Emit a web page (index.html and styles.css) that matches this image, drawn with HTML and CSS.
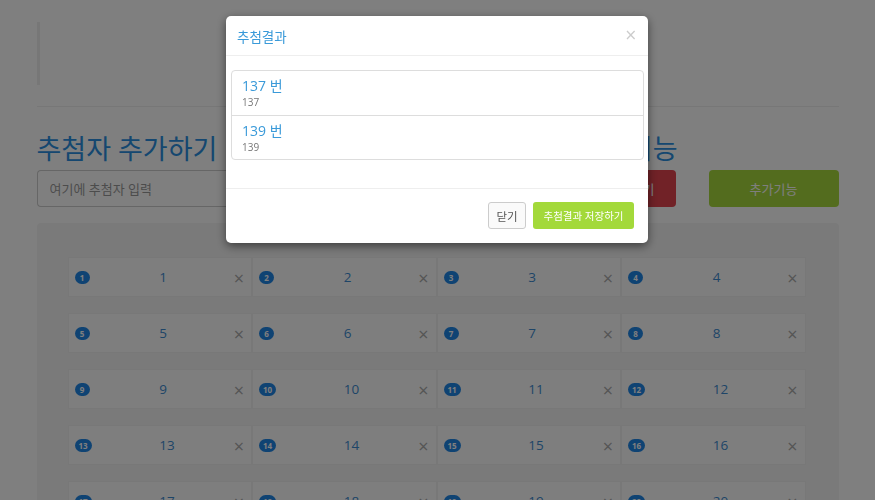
FILE: index.html
```html
<!DOCTYPE html>
<html lang="ko">
<head>
<meta charset="utf-8">
<title>추첨</title>
<link rel="stylesheet" href="styles.css">
</head>
<body>
<div class="container">
  <blockquote class="intro"></blockquote>
  <hr class="divider">
  <div class="head-row">
    <h2 class="title-main">추첨자 추가하기</h2>
    <h2 class="title-side">랜덤 추첨 기능</h2>
  </div>
  <div class="control-row">
    <div class="input-group">
      <input class="name-input" type="text" placeholder="여기에 추첨자 입력">
      <button class="btn btn-danger">추첨하기</button>
    </div>
    <button class="btn btn-extra">추가기능</button>
  </div>
  <div class="well">
    <div class="grid" id="grid"></div>
  </div>
</div>

<div class="backdrop"></div>
<div class="modal">
  <div class="modal-header">
    <h4 class="modal-title">추첨결과</h4>
    <button class="close">×</button>
  </div>
  <div class="modal-body">
    <div class="list-group">
      <div class="list-item">
        <div class="item-head">137 번</div>
        <div class="item-text">137</div>
      </div>
      <div class="list-item">
        <div class="item-head">139 번</div>
        <div class="item-text">139</div>
      </div>
    </div>
  </div>
  <div class="modal-footer">
    <button class="btn btn-default">닫기</button>
    <button class="btn btn-save">추첨결과 저장하기</button>
  </div>
</div>
<script>
  var g = document.getElementById('grid');
  for (var i = 1; i <= 20; i++) {
    var c = document.createElement('div');
    c.className = 'cell';
    c.innerHTML = '<div class="cell-left"><span class="badge">' + i + '</span></div>' +
      '<div class="cell-right"><span class="num">' + i + '</span><span class="del">×</span></div>';
    g.appendChild(c);
  }
</script>
</body>
</html>
```
FILE: styles.css
```css
html, body {
  margin: 0;
  padding: 0;
  background: #fff;
  font-family: "Open Sans", "Noto Sans CJK KR", sans-serif;
  color: #333;
  overflow: hidden;
  height: 500px;
}

.container {
  width: 802px;
  margin: 0 auto;
}

.intro {
  margin: 22px 0 0 0;
  height: 63px;
  border-left: 3px solid #eee;
  padding: 0;
}

.divider {
  margin: 21px 0 0 0;
  border: 0;
  border-top: 1px solid #eee;
}

.head-row {
  display: flex;
  width: 641px;
  justify-content: space-between;
  margin-top: 25px;
}

.title-main, .title-side {
  margin: 0;
  font-size: 27px;
  font-weight: 400;
  line-height: 33px;
  color: #2b8fe0;
}

.control-row {
  display: flex;
  align-items: stretch;
  margin-top: 5px;
  height: 37px;
  gap: 33px;
}

.input-group {
  display: flex;
  width: 639px;
}

.name-input {
  flex: 1;
  border: 1px solid #ccc;
  border-right: 0;
  border-radius: 4px 0 0 4px;
  padding: 0 12px;
  font-family: inherit;
  font-size: 13px;
  color: #555;
  background: #fff;
}

.name-input::placeholder {
  color: #999;
}

.btn {
  font-family: inherit;
  border: 1px solid transparent;
  border-radius: 4px;
  cursor: pointer;
  padding: 0;
}

.btn-danger {
  width: 90px;
  background: #e2444f;
  color: #fff;
  border-radius: 0 4px 4px 0;
  font-size: 13px;
}

.btn-extra {
  width: 130px;
  background: #a6d83c;
  color: #fff;
  font-size: 13px;
}

.well {
  margin-top: 16px;
  background: #f5f5f5;
  border-radius: 4px;
  padding: 34px 33px 40px 31px;
}

.grid {
  display: grid;
  grid-template-columns: repeat(4, 1fr);
  row-gap: 16px;
}

.cell {
  height: 40px;
  box-sizing: border-box;
  background: #fdfdfd;
  border: 1px solid #f1f1f1;
  display: grid;
  grid-template-columns: 1fr 1fr;
  align-items: center;
  padding: 0 7px 0 6px;
}

.badge {
  display: inline-block;
  min-width: 15px;
  height: 13px;
  box-sizing: border-box;
  padding: 0 4px;
  border-radius: 7px;
  background: #1f86e6;
  color: #fff;
  font-size: 8px;
  font-weight: 700;
  line-height: 13px;
  text-align: center;
  vertical-align: middle;
  position: relative;
  top: -1px;
}

.cell-right {
  display: flex;
  align-items: center;
  justify-content: space-between;
}

.num {
  font-size: 13.5px;
  color: #3d8bd0;
  padding-left: 0;
}

.del {
  font-size: 18px;
  color: #aaa;
  line-height: 1;
  position: relative;
  top: 1px;
}

.backdrop {
  position: fixed;
  inset: 0;
  background: rgba(0, 0, 0, 0.5);
}

.modal {
  position: fixed;
  top: 16px;
  left: 226px;
  width: 422px;
  box-sizing: border-box;
  background: #fff;
  border-radius: 5px;
  box-shadow: 0 3px 10px rgba(0, 0, 0, 0.5);
}

.modal-header {
  height: 40px;
  box-sizing: border-box;
  display: flex;
  align-items: center;
  justify-content: space-between;
  padding: 0 11px;
  border-bottom: 1px solid #eee;
}

.modal-title {
  margin: 0;
  font-size: 13.5px;
  font-weight: 400;
  color: #3a9ad9;
}

.close {
  background: none;
  border: 0;
  padding: 0;
  font-size: 15px;
  color: #ccc;
  line-height: 1;
  font-family: "DejaVu Sans", sans-serif;
  margin-right: 0;
}

.modal-body {
  padding: 14px 4px 28px 5px;
}

.list-group {
  border: 1px solid #ddd;
  border-radius: 4px;
}

.list-item {
  height: 44px;
  box-sizing: border-box;
  padding: 6px 10px 0;
}

.list-item + .list-item {
  border-top: 1px solid #ddd;
}

.item-head {
  font-size: 14px;
  line-height: 17px;
  color: #3a9ad9;
}

.item-text {
  font-size: 10px;
  line-height: 14px;
  color: #777;
  margin-top: 1px;
}

.modal-footer {
  border-top: 1px solid #eee;
  padding: 13px 14px 14px;
  display: flex;
  justify-content: flex-end;
  gap: 7px;
}

.btn-default {
  width: 38px;
  height: 27px;
  background: #fafafa;
  border-color: #ccc;
  color: #555;
  font-size: 11.5px;
  border-radius: 3px;
}

.btn-save {
  width: 101px;
  height: 27px;
  background: #a3d93a;
  color: #fff;
  font-size: 10.5px;
  border-radius: 3px;
}
```
